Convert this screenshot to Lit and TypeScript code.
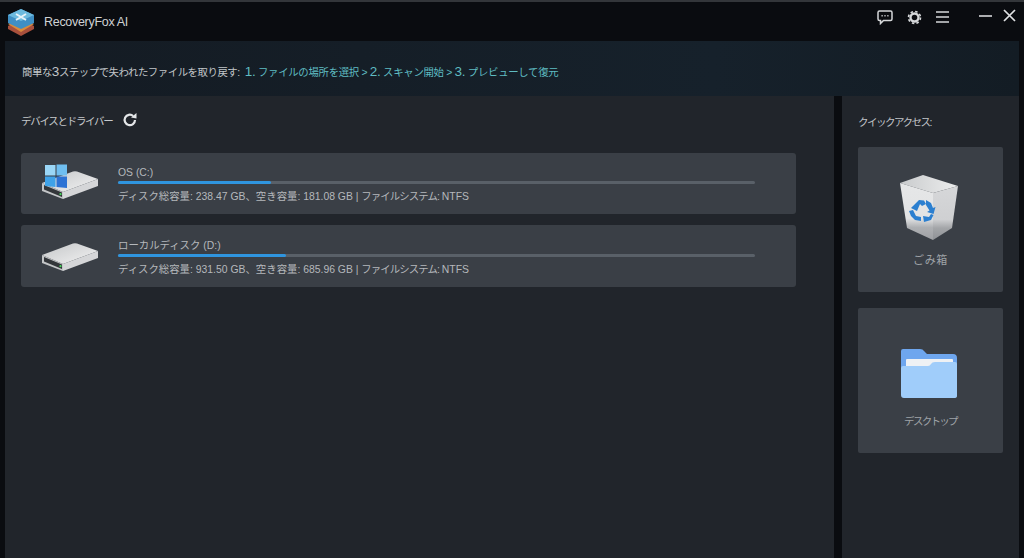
import { LitElement, html, css, svg } from "lit";
import { customElement } from "lit/decorators.js";

const drive = (win: boolean) => svg`
<svg class="drive" viewBox="0 -8 58 38" width="58" height="38">
  <defs>
    <linearGradient id="top${win ? "a" : "b"}" x1="0" y1="0" x2="1" y2="1"><stop offset="0" stop-color="#c4c6c8"/><stop offset="1" stop-color="#f3f3f3"/></linearGradient>
  </defs>
  <path d="M0 12 L31 0.5 Q33 0 35 0.5 L56 8 L21 21 Z" fill="url(#top${win ? "a" : "b"})"/>
  <path d="M56 8 V15 L21 28 V21 Z" fill="#d5d6d8"/>
  <path d="M0 12 L21 21 V28 L0 20 Z" fill="#c3c5c7"/>
  <path d="M2 14 L20 21.6 V26 L2 18.6 Z" fill="#33363a"/>
  <circle cx="18.5" cy="23.2" r="1.1" fill="#46d45a"/>
  ${win ? svg`
    <path d="M3 -6 H13.5 V4.5 H3 Z" fill="#9ad6f6"/>
    <path d="M14.5 -6.5 H25 V4.5 H14.5 Z" fill="#6fbef0"/>
    <path d="M3 5.5 H13.5 V16 L3 15 Z" fill="#3fa2e8"/>
    <path d="M14.5 5.5 H25 V17 L14.5 16 Z" fill="#2c72d4"/>` : ""}
</svg>`;

@customElement("app-root")
export class AppRoot extends LitElement {
  static styles = css`
    :host { display: block; width: 1024px; height: 558px; overflow: hidden; background: #0a0c10; font-family: "Liberation Sans", "Noto Sans CJK JP", sans-serif; color: #c4c7ca; }
    .titlebar { height: 39px; border-top: 2px solid #33363a; display: flex; align-items: center; padding: 0 8px 0 7px; }
    .logo { margin-right: 9px; }
    .appname { font-size: 12.5px; letter-spacing: -0.3px; color: #d0d2d4; flex: 1; margin-top: 1px; }
    .tools { display: flex; align-items: center; gap: 14px; margin-right: 30px; align-self: flex-start; margin-top: 7px; }
    .wins { display: flex; align-items: center; gap: 11px; align-self: flex-start; margin-top: 7px; }
    svg { display: block; }
    .main { height: 517px; margin: 0 5px; display: flex; flex-direction: column; }
    .banner { height: 55px; box-sizing: border-box; display: flex; align-items: center; padding: 5px 0 0 17px; background: linear-gradient(90deg, #141b23, #16212b 70%, #131c24); font-size: 10.4px; letter-spacing: -0.45px; white-space: nowrap; color: #c2c6c9; }
    .banner .steps { color: #5fbcc2; margin-left: 5px; letter-spacing: -0.3px; }
    .big { font-size: 13.5px; }
    .panels { flex: 1; display: flex; gap: 8px; }
    .left { flex: 1; background: #21252b; padding: 14px 16px; box-sizing: border-box; }
    .right { width: 177px; background: #21252b; padding: 18px 16px; box-sizing: border-box; }
    .head { display: flex; align-items: center; gap: 10px; font-size: 10.5px; height: 20px; letter-spacing: -1.3px; margin-bottom: 23px; color: #c6c9cc; }
    .disk { height: 61px; width: 775px; background: #3a3f46; border-radius: 3px; margin-bottom: 11px; display: flex; align-items: center; padding-left: 21px; box-sizing: border-box; }
    .disk + .disk { height: 62px; }
    .drive { margin-right: 18px; margin-top: -4px; flex: none; }
    .info { width: 637px; font-size: 10.4px; color: #b5b8bc; margin-top: 1px; }
    .name { line-height: 14px; height: 15px; }
    .bar { height: 3px; border-radius: 2px; background: #596068; }
    .fill { height: 100%; border-radius: 2px; background: #2f95df; }
    .stat { line-height: 14px; margin-top: 6px; white-space: nowrap; margin-bottom: -2px; }
    .tight { letter-spacing: -0.9px; }
    .qtitle { font-size: 10.5px; line-height: 14px; letter-spacing: -1.5px; margin-bottom: 18px; margin-top: 1px; color: #c0c3c7; }
    .qcard { width: 145px; height: 145px; background: #3a3f46; border-radius: 2px; margin-bottom: 16px; display: flex; flex-direction: column; align-items: center; font-size: 11px; color: #9fa3a8; }
    .qcard svg { margin-top: 28px; margin-right: 4px; }
    .qcard.fold svg { margin-top: 40px; margin-right: 4px; }
    .qcard span { margin-top: 11px; line-height: 16px; letter-spacing: 0.6px; }
    .qcard.fold span { margin-top: 13px; font-size: 10.5px; letter-spacing: -1.7px; }
  `;

  private disk(win: boolean, name: string, pct: number, total: string, free: string) {
    return html`<div class="disk">
      ${drive(win)}
      <div class="info">
        <div class="name">${name}</div>
        <div class="bar"><div class="fill" style="width:${pct}%"></div></div>
        <div class="stat">ディスク総容量: ${total} GB、空き容量: ${free} GB | <span class="tight">ファイルシステム:</span> NTFS</div>
      </div>
    </div>`;
  }

  render() {
    return html`
      <div class="titlebar">
        <svg class="logo" width="28" height="28" viewBox="0 0 28 28">
          <path d="M14 11 L27 18 V21 L14 28 L1 21 V18 Z" fill="#a8503c"/>
          <path d="M14 9 L27 16 L14 24 L1 16 Z" fill="#d98a3c"/>
          <path d="M14 1 L27 7 V15 L14 21 L1 15 V7 Z" fill="#3f8fc4"/>
          <path d="M14 1 L27 7 L14 13 L1 7 Z" fill="#6cb9dd"/>
          <path d="M9 6 L19 12 M19 6 L9 12" stroke="#e6f2f8" stroke-width="2"/>
        </svg>
        <div class="appname">RecoveryFox AI</div>
        <div class="tools">
          <svg width="16" height="16" viewBox="0 0 16 16" fill="none" stroke="#d6d8da" stroke-width="1.5"><path d="M2.5 2 H13.5 Q15 2 15 3.5 V10 Q15 11.5 13.5 11.5 H6.5 L3.5 14.5 V11.5 H2.5 Q1 11.5 1 10 V3.5 Q1 2 2.5 2 Z"/><path d="M4.5 6.8 H5.7 M7.4 6.8 H8.6 M10.3 6.8 H11.5" stroke-width="1.6"/></svg>
          <svg width="15" height="15" viewBox="0 0 15 15"><circle cx="7.5" cy="7.5" r="4" fill="none" stroke="#d6d8da" stroke-width="2.4"/><circle cx="7.5" cy="7.5" r="6" fill="none" stroke="#d6d8da" stroke-width="1.6" stroke-dasharray="2.5 2.2"/></svg>
          <svg width="13" height="14" viewBox="0 0 13 14" stroke="#d6d8da" stroke-width="1.6"><path d="M0 2 H13 M0 7 H13 M0 12 H13"/></svg>
        </div>
        <div class="wins">
          <svg width="13" height="12" viewBox="0 0 13 12" stroke="#d6d8da" stroke-width="1.6"><path d="M0 6 H13"/></svg>
          <svg width="13" height="13" viewBox="0 0 13 13" stroke="#e0e2e4" stroke-width="1.7"><path d="M1 1 L12 12 M12 1 L1 12"/></svg>
        </div>
      </div>
      <div class="main">
        <div class="banner">
          <span>簡単な<span class="big">3</span>ステップで失われたファイルを取り戻す:</span>
          <span class="steps"><span class="big">1.</span> ファイルの場所を選択 &gt; <span class="big">2.</span> スキャン開始 &gt; <span class="big">3.</span> プレビューして復元</span>
        </div>
        <div class="panels">
          <div class="left">
            <div class="head">
              <span>デバイスとドライバー</span>
              <svg width="16" height="16" viewBox="0 0 16 16" fill="none"><path d="M13 8 A5.2 5.2 0 1 1 11.2 4" stroke="#e4e6e8" stroke-width="2.2"/><path d="M9 5.5 L14.5 6.5 V1 Z" fill="#e4e6e8"/></svg>
            </div>
            ${this.disk(true, "OS (C:)", 24, "238.47", "181.08")}
            ${this.disk(false, "ローカルディスク (D:)", 26.3, "931.50", "685.96")}
          </div>
          <div class="right">
            <div class="qtitle">クイックアクセス:</div>
            <div class="qcard">
              <svg width="58" height="66" viewBox="0 0 58 66">
                <defs>
                  <linearGradient id="inner" x1="0" y1="0" x2="1" y2="0"><stop offset="0" stop-color="#c9cbcd"/><stop offset="1" stop-color="#eceded"/></linearGradient>
                  <linearGradient id="shade" x1="0" y1="0" x2="0" y2="1"><stop offset="0" stop-color="#e6e7e8"/><stop offset="0.62" stop-color="#e2e3e4"/><stop offset="0.78" stop-color="#aeb0b3"/><stop offset="1" stop-color="#9ea0a4"/></linearGradient>
                  <linearGradient id="shade2" x1="0" y1="0" x2="0" y2="1"><stop offset="0" stop-color="#d6d7d9"/><stop offset="0.62" stop-color="#cfd0d2"/><stop offset="0.78" stop-color="#a3a5a8"/><stop offset="1" stop-color="#8f9296"/></linearGradient>
                </defs>
                <path d="M0 8 L23 0 L58 11 L33 18 Z" fill="url(#inner)"/>
                <path d="M0 8 L33 18 V65 L7 53 Z" fill="url(#shade)"/>
                <path d="M33 18 L58 11 L52 53 L33 65 Z" fill="url(#shade2)"/>
                <path d="M13 31 L19 25 L24 25.5 L26 29 L22 31 L20 29 L17 36 L11 33 Z M26 25 L31 28 L33 33 L35.5 32 L33.5 39 L27 37 L29.5 35.5 L26 30 Z M9 36 L13 35 L16 41 L21 42 V46 L15 45 L11 41 Z M23 41 L29 42 L31 39 L33.5 40 L31 45 L24 47 Z" fill="#2b7fd0"/>
              </svg>
              <span>ごみ箱</span>
            </div>
            <div class="qcard fold">
              <svg width="58" height="52" viewBox="0 0 58 52">
                <path d="M3 1 H20 Q23 1 24 3 L27 6 H53 Q57 6 57 10 V30 H1 V3 Q1 1 3 1 Z" fill="#6ea6ee"/>
                <rect x="6" y="11" width="47" height="20" rx="1" fill="#eef1f4"/>
                <path d="M1 20 Q1 18 3 18 H28 Q30 18 31 16 Q32 14 35 14 H55 Q57 14 57 16 V48 Q57 50 54 50 H4 Q1 50 1 47 Z" fill="#a0cdfa"/>
              </svg>
              <span>デスクトップ</span>
            </div>
          </div>
        </div>
      </div>
    `;
  }
}
